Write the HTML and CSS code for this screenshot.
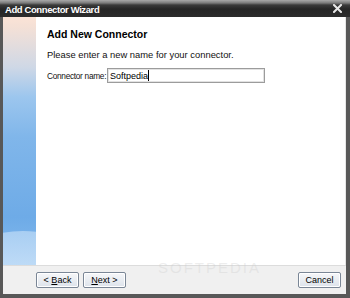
FILE: index.html
```html
<!DOCTYPE html>
<html>
<head>
<meta charset="utf-8">
<link rel="stylesheet" href="styles.css">
</head>
<body>
<div class="window">
  <div class="titlebar">
    <span class="title">Add Connector Wizard</span>
    <svg class="close" width="9" height="9" viewBox="0 0 9 9"><path d="M1 1 L8 8 M8 1 L1 8" stroke="#e8e8e8" stroke-width="2" stroke-linecap="square"/></svg>
  </div>
  <div class="frame">
    <div class="main">
      <div class="sidebar"><div class="swoosh"></div></div>
      <div class="content">
        <h1 class="heading">Add New Connector</h1>
        <p class="intro">Please enter a new name for your connector.</p>
        <div class="field">
          <label class="label">Connector name:</label>
          <div class="input"><span class="value">Softpedia</span><span class="caret"></span></div>
        </div>
      </div>
    </div>
    <div class="footer">
      <div class="nav">
        <button class="btn">&lt; <u>B</u>ack</button>
        <button class="btn"><u>N</u>ext &gt;</button>
      </div>
      <button class="btn">Cancel</button>
      <span class="watermark">SOFTPEDIA</span>
    </div>
  </div>
</div>
</body>
</html>
```
FILE: styles.css
```css
html, body { margin: 0; padding: 0; }
body { width: 350px; height: 298px; overflow: hidden; background: #4a4a4a; font-family: "Liberation Sans", Arial, sans-serif; }
.window { width: 350px; height: 298px; display: flex; flex-direction: column; background: #585858; }
.titlebar {
  height: 17px; flex: none; display: flex; align-items: center; justify-content: space-between;
  padding: 0 8px 0 5px;
  background: linear-gradient(#a9a9a9 0, #7a7a7a 3px, #3a3a3a 5px, #262626 9px, #2c2c2c 17px);
}
.title { color: #fff; font-family: "Liberation Sans", Arial, sans-serif; font-weight: bold; font-size: 9.5px; letter-spacing: -0.4px; margin-top: 1px; }
.close { display: block; }
.frame { flex: 1; display: flex; flex-direction: column; margin: 0 4px 4px 3px; background: #f0f0f0; }
.main { flex: 1; display: flex; background: #fff; border-right: 1px solid #e6e6e6; }
.sidebar {
  width: 33px; flex: none; position: relative; overflow: hidden;
  background: linear-gradient(#fbe3d6 0, #f4e0d6 10px, #cfd8e6 50px, #9cc6ee 80px, #80b6ea 120px, #6eabe7 200px, #84bbee 248px);
}
.swoosh { position: absolute; left: -40px; top: 214px; width: 120px; height: 60px; border-radius: 50%; background: linear-gradient(#b6d6f5, #dcecfb); opacity: 0.8; }
.content { flex: 1; padding: 10px 10px 0 11px; }
.heading { margin: 0; font-family: "Liberation Sans", Arial, sans-serif; font-weight: bold; font-size: 10.5px; line-height: 14px; color: #000; }
.intro { margin: 8px 0 0; font-family: "Liberation Sans", Arial, sans-serif; font-size: 9.4px; line-height: 11px; color: #111; }
.field { display: flex; align-items: center; margin-top: 8px; }
.label { flex: none; font-family: "Liberation Sans", Arial, sans-serif; font-size: 8.3px; letter-spacing: -0.3px; color: #111; width: 60px; white-space: nowrap; }
.input { flex: none; width: 154px; height: 13px; border: 1px solid #9c9c9c; box-shadow: inset 0 0 0 1px #e2e2e2; background: #fff; display: flex; align-items: center; padding-left: 2px; }
.value { font-family: "Liberation Sans", Arial, sans-serif; font-size: 9px; color: #000; }
.caret { width: 1px; height: 11px; background: #000; }
.footer { height: 28px; flex: none; display: flex; align-items: center; justify-content: space-between; padding: 0 5px 0 33px; border-top: 1px solid #dcdcdc; position: relative; }
.nav { display: flex; gap: 4px; }
.btn {
  width: 43px; height: 16px; padding: 0; margin: 0; border: 1px solid #7a8696; border-radius: 2px;
  background: linear-gradient(#f6f7f9, #dde3eb); box-shadow: inset 0 0 0 1px #fff;
  font-family: "Liberation Sans", Arial, sans-serif; font-size: 9px; color: #000;
}
.btn u { text-decoration: underline; }
.watermark { position: absolute; left: 155px; top: -7px; font-family: "Liberation Sans", Arial, sans-serif; font-size: 15px; letter-spacing: 2px; color: rgba(205,205,205,0.35); pointer-events: none; }
```
